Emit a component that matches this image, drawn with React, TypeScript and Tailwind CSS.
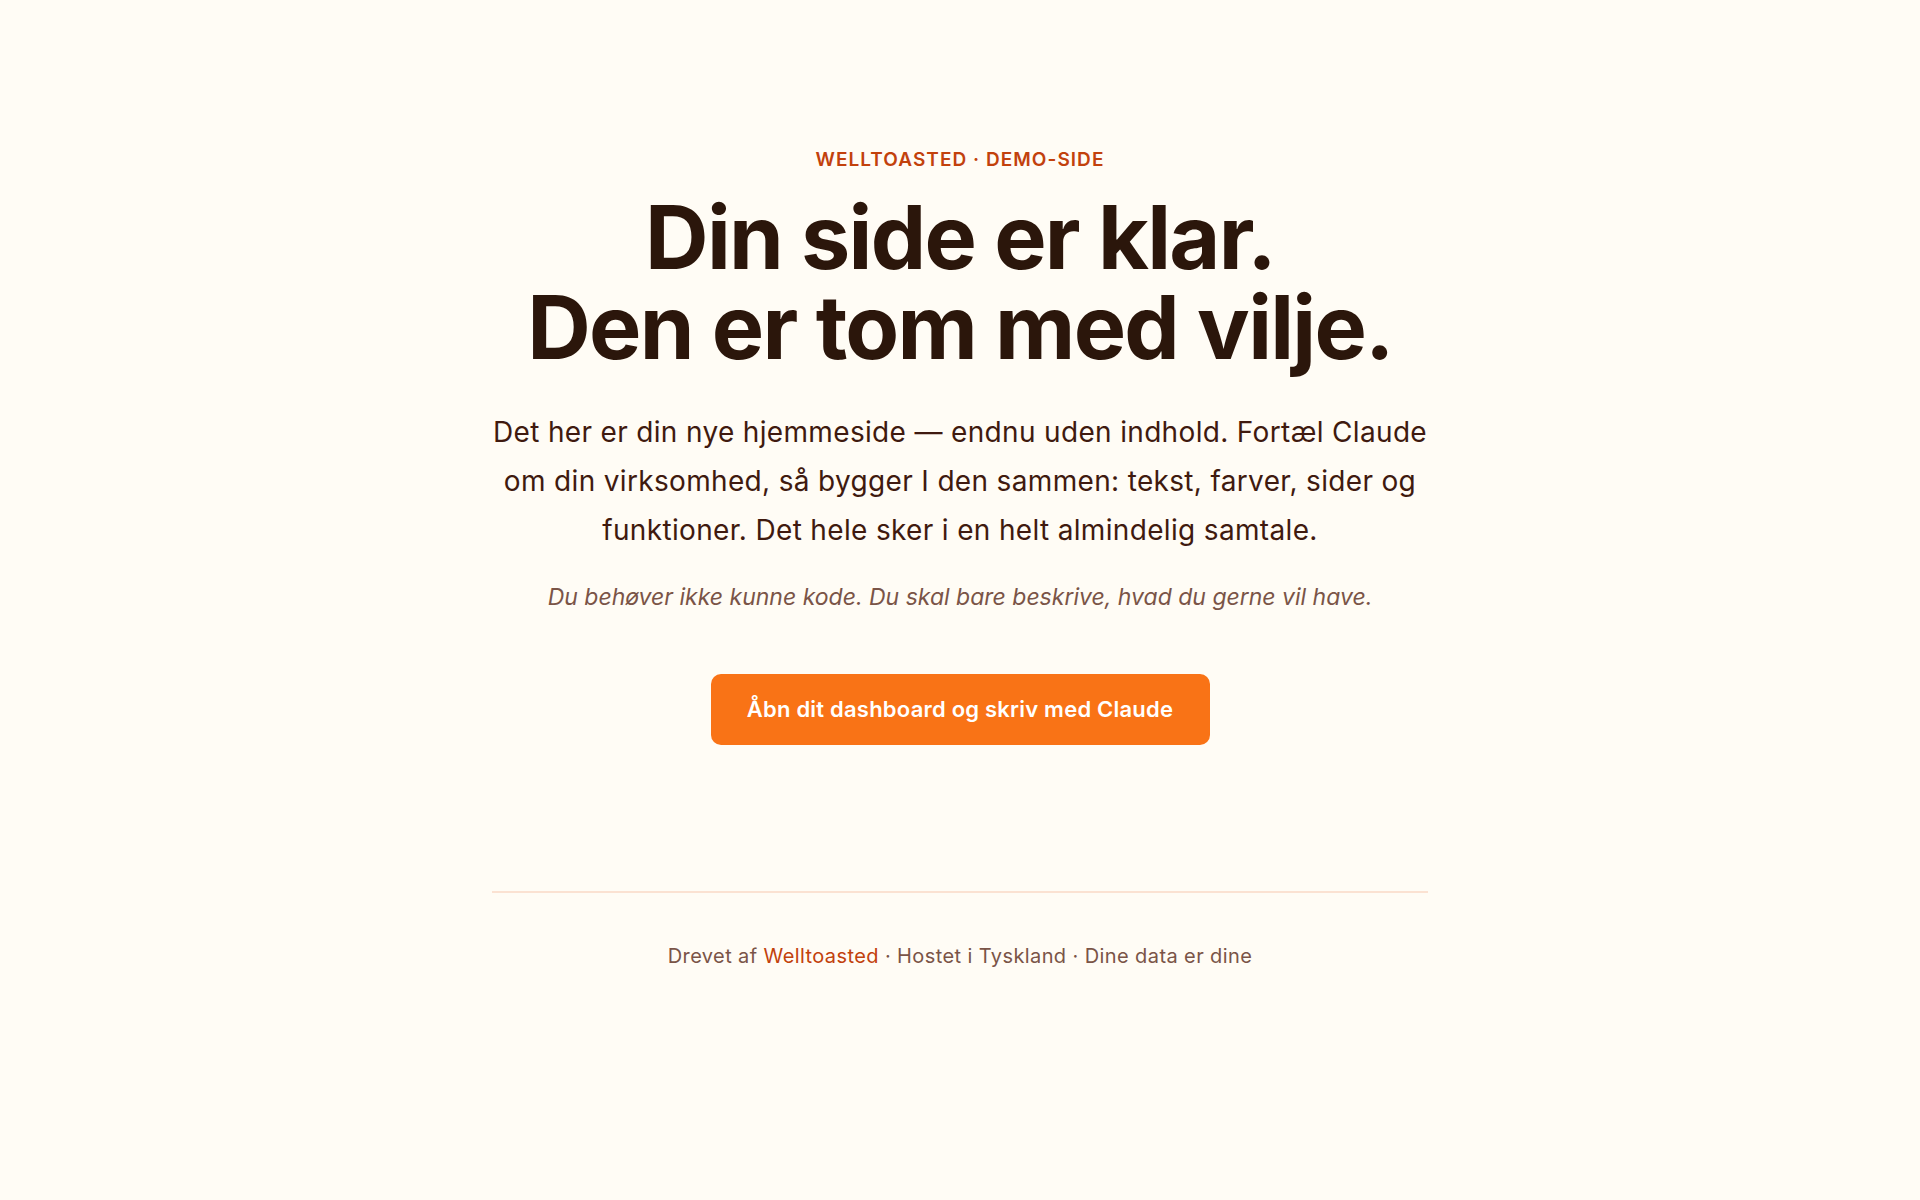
export default function App() {
  return (
    <div
      className="min-h-screen bg-[#fffcf5] text-[#2b160b]"
      style={{ fontFamily: 'Inter, "Noto Sans", sans-serif' }}
    >
      <main className="mx-auto flex w-[936px] flex-col items-center pt-[146px] text-center">
        <p className="text-[19px] font-semibold uppercase leading-[28px] tracking-[0.055em] text-[#c2410c]">
          Welltoasted · Demo-side
        </p>
        <h1 className="mt-[18px] text-[88px] font-bold leading-[90px] tracking-[-0.02em] text-[#2b160b]">
          <span className="block">Din side er klar.</span>
          <span className="block">Den er tom med vilje.</span>
        </h1>
        <p className="mt-[36px] text-[28px] leading-[49px] tracking-[0.012em] text-[#3f1a0f]">
          Det her er din nye hjemmeside — endnu uden indhold. Fortæl Claude om din virksomhed, så bygger I den sammen:
          tekst, farver, sider og funktioner. Det hele sker i en helt almindelig samtale.
        </p>
        <p className="mt-[24px] text-[23px] italic leading-[36px] text-[#7a5447]">
          Du behøver ikke kunne kode. Du skal bare beskrive, hvad du gerne vil have.
        </p>
        <a
          href="#"
          className="mt-[59px] flex h-[71px] w-[499px] items-center justify-center rounded-[10px] bg-[#f97316] text-[22px] font-semibold tracking-[0.01em] text-white"
        >
          Åbn dit dashboard og skriv med Claude
        </a>
        <footer className="mt-[146px] w-full border-t-2 border-[#fbe2d2] pt-[49px]">
          <p className="text-[20px] leading-[28px] tracking-[0.02em] text-[#7a5447]">
            Drevet af <a href="#" className="text-[#c2410c]">Welltoasted</a> · Hostet i Tyskland · Dine data er dine
          </p>
        </footer>
      </main>
    </div>
  );
}
